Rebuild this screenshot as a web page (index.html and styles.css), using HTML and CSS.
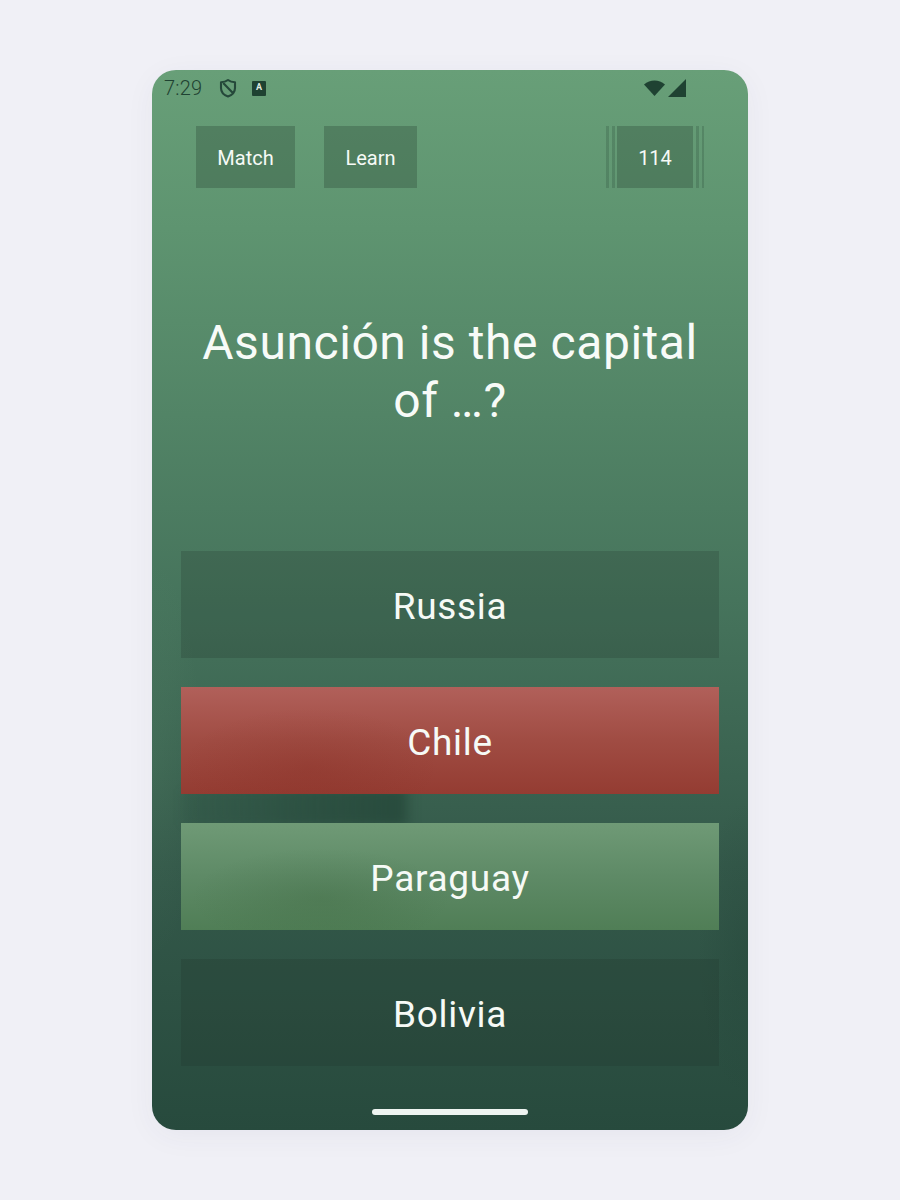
FILE: index.html
```html
<!DOCTYPE html>
<html lang="en">
<head>
  <meta charset="UTF-8">
  <title>Capitals Quiz</title>
  <link rel="stylesheet" href="styles.css">
</head>
<body>
  <div class="phone">
    <div class="status">
      <span class="time">7:29</span>
      <svg class="shield" width="18" height="20" viewBox="0 0 18 20">
        <path d="M9 2 C11 3.6 13.5 4.2 16 4.2 V10 C16 14 13.2 17 9 18.4 C4.8 17 2 14 2 10 V4.2 C4.5 4.2 7 3.6 9 2 Z M4.2 5 L13.4 14.6" fill="none" stroke="#25483a" stroke-width="2.1" stroke-linejoin="round"/>
      </svg>
      <span class="keyboard">A</span>
      <span class="status-right">
        <svg width="21" height="16" viewBox="0 0 21 16"><path d="M0 4.5 C6 -1 15 -1 21 4.5 L10.5 16 Z" fill="#1f4232"/></svg>
        <svg width="18" height="18" viewBox="0 0 18 18"><path d="M18 0 V18 H0 Z" fill="#1f4232"/></svg>
      </span>
    </div>

    <div class="toolbar">
      <button class="tool match">Match</button>
      <button class="tool learn">Learn</button>
      <div class="score-wrap">
        <span class="stripes"></span>
        <span class="tool score">114</span>
        <span class="stripes"></span>
      </div>
    </div>

    <h1 class="question">Asunción is the capital of …?</h1>

    <div class="answers">
      <button class="answer plain">Russia</button>
      <button class="answer wrong">Chile</button>
      <button class="answer right">Paraguay</button>
      <button class="answer plain">Bolivia</button>
    </div>

    <div class="home-bar"></div>
  </div>
</body>
</html>
```

FILE: styles.css
```css
* {
  box-sizing: border-box;
}

body {
  margin: 0;
  height: 1200px;
  padding-top: 70px;
  background-color: #f0f0f6;
  font-family: Roboto, "Liberation Sans", sans-serif;
  overflow: hidden;
}

button {
  font-family: inherit;
  border: none;
  color: #f6faf6;
}

.phone {
  width: 596px;
  height: 1060px;
  margin: 0 auto;
  border-radius: 24px;
  display: flex;
  flex-direction: column;
  background:
    radial-gradient(50px 150px at 100% 83%, rgba(30, 60, 50, 0.25), transparent),
    radial-gradient(50px 200px at 0% 65%, rgba(120, 170, 130, 0.1), transparent),
    linear-gradient(180deg, #689f78 0%, #5e9470 15%, #46745c 50%, #34594a 75%, #274a3d 100%);
  box-shadow: 0 6px 30px rgba(60, 60, 90, 0.05);
}

.status {
  height: 36px;
  display: flex;
  align-items: center;
  padding: 0 62px 0 12px;
  color: #1f4232;
}

.time {
  font-size: 20px;
  font-weight: 300;
  letter-spacing: 0.2px;
  width: 55px;
}

.shield {
  margin-right: 15px;
}

.keyboard {
  width: 14px;
  height: 15px;
  background: #1f4232;
  color: #dfe9e2;
  font-size: 9px;
  font-weight: 700;
  line-height: 13px;
  text-align: center;
  border-radius: 1px;
}

.status-right {
  margin-left: auto;
  display: flex;
  align-items: center;
  gap: 3px;
}

.toolbar {
  margin-top: 20px;
  height: 62px;
  display: flex;
  padding: 0 44px;
}

.tool {
  height: 62px;
  padding: 2px 0 0;
  background: rgba(45, 72, 56, 0.34);
  font-size: 20px;
  color: #f6faf6;
  display: flex;
  align-items: center;
  justify-content: center;
}

.match {
  width: 99px;
  margin-right: 29px;
}

.learn {
  width: 93px;
}

.score-wrap {
  margin-left: auto;
  display: flex;
}

.score {
  width: 76px;
  margin: 0 3px 0 2px;
}

.stripes {
  width: 9px;
  height: 62px;
  background: linear-gradient(90deg, rgba(45, 80, 60, 0.28) 0 3px, transparent 3px 6px, rgba(45, 80, 60, 0.28) 6px 9px);
}

.stripes:last-child {
  width: 8px;
}

.question {
  margin: 126px 30px 0;
  height: 116px;
  font-size: 48px;
  font-weight: 400;
  letter-spacing: 0.55px;
  line-height: 58px;
  text-align: center;
  color: #f8fbf8;
}

.answers {
  position: relative;
  margin-top: 121px;
  padding: 0 29px;
  display: flex;
  flex-direction: column;
  gap: 29px;
}

.answers::before {
  content: "";
  position: absolute;
  left: 30px;
  top: 238px;
  width: 232px;
  height: 36px;
  background: linear-gradient(90deg, rgba(28, 60, 48, 0.1), rgba(28, 60, 48, 0.42) 60%, rgba(28, 60, 48, 0.55) 94%, rgba(28, 60, 48, 0));
  filter: blur(5px);
}

.answer {
  position: relative;
  height: 107px;
  font-size: 37px;
  letter-spacing: 0.7px;
  padding: 4px 0 0;
}

.plain {
  background: rgba(30, 50, 42, 0.22);
}

.wrong {
  background:
    radial-gradient(130px 60px at 24% 75%, rgba(120, 30, 20, 0.16), transparent),
    linear-gradient(180deg, #b1605a 0%, #a04c43 50%, #943c32 100%);
}

.right {
  background:
    radial-gradient(130px 50px at 26% 70%, rgba(50, 90, 50, 0.22), transparent),
    linear-gradient(180deg, #6f9a76 0%, #5e8a66 50%, #507e56 100%);
}

.home-bar {
  width: 156px;
  height: 6px;
  margin: 43px auto 0;
  border-radius: 3px;
  background: #eef4f1;
}
```
